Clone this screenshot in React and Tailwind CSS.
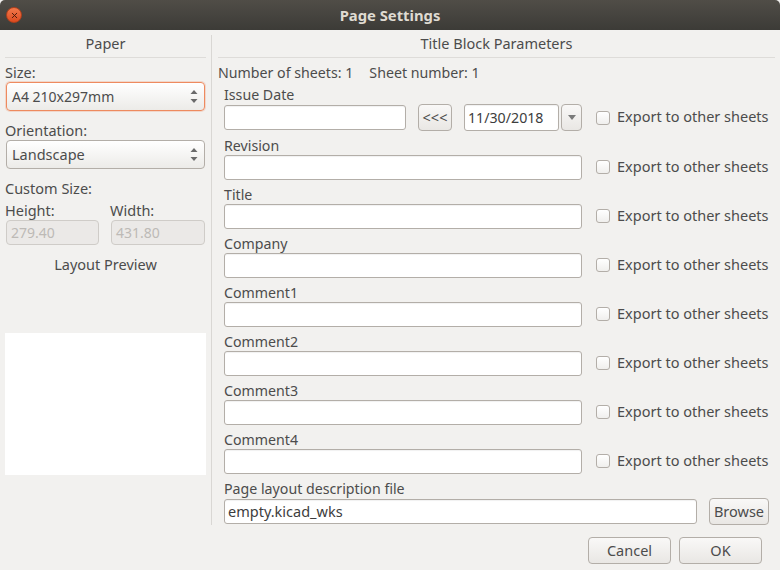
import React from 'react';
import { X } from 'lucide-react';

const FONT = "font-['Noto_Sans','Open_Sans',sans-serif]";
const INPUT = 'h-[25px] rounded-[3px] border border-[#b3aea8] bg-white shadow-[inset_0_1px_1px_rgba(0,0,0,0.06)]';
const BUTTON = 'flex items-center justify-center rounded-[4px] border border-[#b3aea8] bg-gradient-to-b from-[#f9f8f7] to-[#e9e7e4] text-[#4c4c4c]';

const Label = ({ className = 'leading-[16px]', children }) => (
  <div className={`h-[18px] whitespace-nowrap ${className}`}>{children}</div>
);

const FieldLabel = ({ children }) => <Label className="text-[14.2px] leading-[18px]">{children}</Label>;

const Heading = ({ children }) => (
  <div className="h-[28px] border-b border-[#dedcd9] text-center leading-[26px]">{children}</div>
);

const Spinner = () => (
  <svg width="8" height="15" viewBox="0 0 8 15" className="mr-px">
    <path d="M4 1l3.5 4h-7zM4 14L.5 10h7z" fill="#6a6a6a" />
  </svg>
);

const SelectBox = ({ value, focused, className = '' }) => (
  <div
    className={`mx-px flex h-[29px] items-center justify-between rounded-[4px] border bg-gradient-to-b from-white to-[#ecebe8] pl-[5px] pr-[5px] ${
      focused ? 'border-[#ee8a5f] shadow-[0_0_0_1px_rgba(238,138,95,0.25)]' : 'border-[#b3aea8]'
    }`}
  >
    <span className={className}>{value}</span>
    <Spinner />
  </div>
);

const ExportCheck = ({ boxClass = '' }) => (
  <div className="ml-[14px] flex items-center whitespace-nowrap">
    <span className={`h-[14px] w-[14px] rounded-[3px] border border-[#b3aea8] bg-gradient-to-b from-white to-[#f0efed] ${boxClass}`} />
    <span className="mb-[2px] ml-[7px]">Export to other sheets</span>
  </div>
);

const ParamRow = ({ label }) => (
  <div className="h-[49px]">
    <FieldLabel>{label}</FieldLabel>
    <div className="flex items-center">
      <div className={`${INPUT} w-[358px]`} />
      <ExportCheck boxClass="mb-px" />
    </div>
  </div>
);

const SizeField = ({ label, value, className }) => (
  <div className={className}>
    <Label>{label}</Label>
    <div className="mx-px flex h-[25px] items-center rounded-[4px] border border-[#cfccc8] bg-[#ebe9e7] pl-[4px] text-[14px] text-[#bdbab6]">
      {value}
    </div>
  </div>
);

const PaperPanel = () => (
  <div className="flex w-[211px] flex-col pl-[5px] pr-[5px]">
    <Heading>Paper</Heading>
    <Label className="mt-[6px] leading-[16px]">Size:</Label>
    <SelectBox value="A4 210x297mm" focused className="mb-px text-[14px]" />
    <Label className="mt-[11px] leading-[17px]">Orientation:</Label>
    <SelectBox value="Landscape" />
    <Label className="mt-[11px] leading-[16px]">Custom Size:</Label>
    <div className="mt-[4px] flex">
      <SizeField label="Height:" value="279.40" className="w-[95px]" />
      <SizeField label="Width:" value="431.80" className="ml-[10px] w-[96px]" />
    </div>
    <Label className="mt-[11px] text-center leading-[16px]">Layout Preview</Label>
    <div className="mt-[59px] h-[142px] bg-white" />
  </div>
);

const TitleBlockPanel = () => (
  <div className="flex-1 pl-[6px] pr-[5px]">
    <Heading>Title Block Parameters</Heading>
    <div className="mt-[6px] flex h-[18px] items-center text-[14.2px] leading-[18px]">
      <span>Number of sheets: 1</span>
      <span className="ml-[16px]">Sheet number: 1</span>
    </div>
    <div className="pl-[6px]">
      <div className="mt-[4px] h-[51px]">
        <FieldLabel>Issue Date</FieldLabel>
        <div className="flex items-center">
          <div className={`${INPUT} w-[182px]`} />
          <div className={`${BUTTON} ml-[12px] h-[27px] w-[34px]`}>&lt;&lt;&lt;</div>
          <div className={`${INPUT} ml-[12px] h-[27px] w-[95px] pl-[3px] text-[14.2px] leading-[25px] text-[#3d3d3d]`}>11/30/2018</div>
          <div className={`${BUTTON} ml-[2px] h-[27px] w-[21px]`}>
            <svg width="8" height="5" viewBox="0 0 8 5"><path d="M0 0h8L4 5z" fill="#7a7a7a" /></svg>
          </div>
          <ExportCheck />
        </div>
      </div>
      {['Revision', 'Title', 'Company', 'Comment1', 'Comment2', 'Comment3', 'Comment4'].map((label) => (
        <ParamRow key={label} label={label} />
      ))}
      <FieldLabel>Page layout description file</FieldLabel>
      <div className="flex items-center">
        <div className={`${INPUT} w-[473px] pl-[3px] leading-[23px] text-[#3d3d3d]`}>empty.kicad_wks</div>
        <div className={`${BUTTON} ml-[12px] h-[27px] w-[60px]`}>Browse</div>
      </div>
    </div>
  </div>
);

export default function App() {
  return (
    <div className={`flex h-[570px] w-[780px] flex-col overflow-hidden bg-[#f2f1ef] text-[14.5px] text-[#4c4c4c] ${FONT}`}>
      <div className="relative flex h-[30px] items-center justify-center rounded-t-[5px] bg-gradient-to-b from-[#504d47] to-[#3c3b37]">
        <span className="absolute left-[6px] top-[7px] flex h-[16px] w-[16px] items-center justify-center rounded-full border border-[#b0401c] bg-gradient-to-b from-[#f2784a] to-[#dd4a1e]">
          <X size={9} strokeWidth={2.5} className="text-[#4a1a0a]" />
        </span>
        <span className="text-[14.8px] font-bold text-[#dfdbd2]">Page Settings</span>
      </div>
      <div className="flex">
        <PaperPanel />
        <div className="mt-[5px] h-[490px] w-px bg-[#d9d7d4]" />
        <TitleBlockPanel />
      </div>
      <div className="mt-[12px] flex justify-end pr-[18px]">
        <div className={`${BUTTON} h-[27px] w-[83px]`}>Cancel</div>
        <div className={`${BUTTON} ml-[8px] h-[27px] w-[83px]`}>OK</div>
      </div>
    </div>
  );
}
